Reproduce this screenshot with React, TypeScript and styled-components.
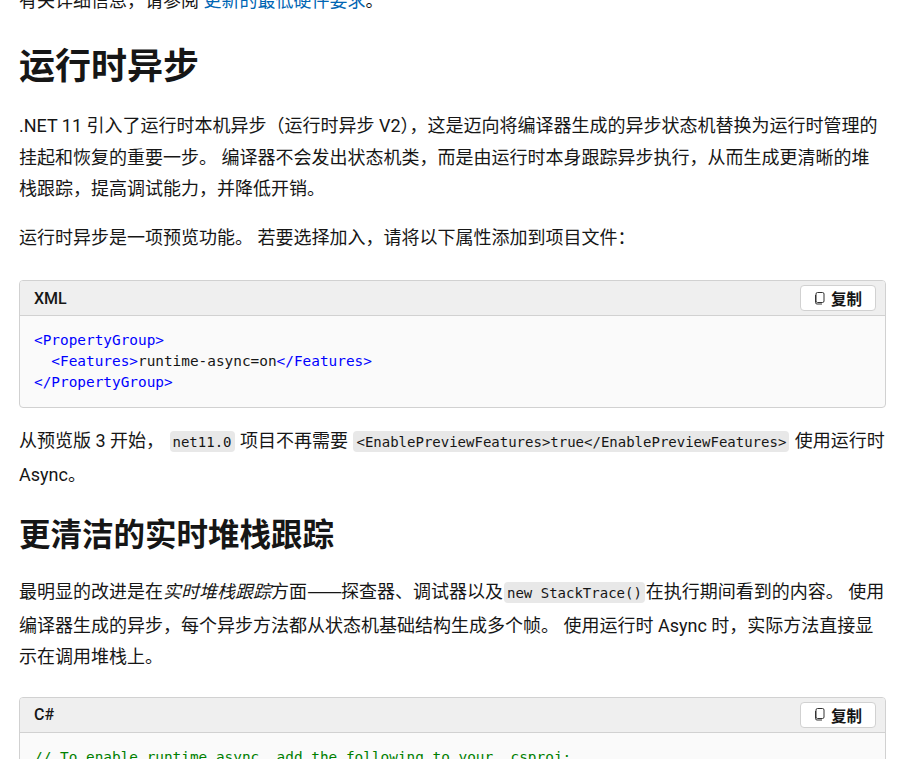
import React from "react";
import styled, { createGlobalStyle } from "styled-components";

const Global = createGlobalStyle`
  html, body { margin: 0; padding: 0; height: 759px; overflow: hidden; background: #fff; }
  body { font-family: Roboto, "Noto Sans CJK SC", sans-serif; color: #161616; }
`;

const Article = styled.main`
  width: 867px;
  margin: -15px 0 0 19px;
  font-size: 18px;
  line-height: 31.5px;
`;
const Para = styled.p<{ $mb?: number; $mt?: number }>`
  margin: ${(p) => p.$mt ?? 0}px 0 ${(p) => p.$mb ?? 17}px;
`;
const Link = styled.a`
  color: #0065b3;
`;
const Dash = styled.span`
  font-family: "Noto Sans CJK SC", sans-serif;
  display: inline-block;
  width: 34px;
  white-space: nowrap;
  transform: scaleX(1.17);
  transform-origin: left center;
`;
const H2 = styled.h2<{ $size: number; $top: number; $bottom: number }>`
  font-size: ${(p) => p.$size}px;
  line-height: 1.3;
  font-weight: 700;
  margin: ${(p) => p.$top}px 0 ${(p) => p.$bottom}px;
  color: #161616;
`;
const InlineCode = styled.code`
  font-family: "DejaVu Sans Mono", monospace;
  font-size: 14px;
  background: #e8e8e8;
  border-radius: 4px;
  padding: 3px 3px 2px;
  margin: 0 1px;
`;
const Block = styled.section`
  border: 1px solid #d1d1d1;
  border-radius: 4px;
  overflow: hidden;
  background: #fafafa;
`;
const BlockHead = styled.header`
  height: 34px;
  background: #efefef;
  border-bottom: 1px solid #d1d1d1;
  display: flex;
  align-items: center;
  justify-content: space-between;
  padding: 0 9px 0 14px;
  font-size: 16px;
  font-weight: 500;
`;
const CopyBtn = styled.button`
  width: 76px;
  height: 26px;
  display: flex;
  align-items: center;
  justify-content: center;
  gap: 6px;
  background: #fff;
  border: 1px solid #d1d1d1;
  border-radius: 4px;
  padding: 0;
  font: 700 15.5px Roboto, "Noto Sans CJK SC", sans-serif;
  color: #161616;
`;
const Pre = styled.pre`
  margin: 0;
  padding: 14px;
  font-family: "DejaVu Sans Mono", monospace;
  font-size: 14.4px;
  line-height: 21px;
  color: #161616;
`;
const Tag = styled.span`
  color: #0000ff;
`;
const Comment = styled.span`
  color: #008000;
`;

const CopyIcon = () => (
  <svg width="11" height="13" viewBox="0 0 11 13" fill="none" stroke="#333" strokeWidth="1">
    <path d="M3.5 .5h5a1.5 1.5 0 0 1 1.5 1.5v7a1.5 1.5 0 0 1-1.5 1.5h-5A1.5 1.5 0 0 1 2 9V2A1.5 1.5 0 0 1 3.5 .5z" />
    <path d="M1.5 3v7.5a1.5 1.5 0 0 0 1.5 1.5h5" />
  </svg>
);

const Head = ({ label }: { label: string }) => (
  <BlockHead>
    <span>{label}</span>
    <CopyBtn>
      <CopyIcon />
      复制
    </CopyBtn>
  </BlockHead>
);

export default function App() {
  return (
    <>
      <Global />
      <Article>
        <Para>
          有关详细信息，请参阅 <Link>更新的最低硬件要求</Link>。
        </Para>
        <H2 $size={36} $top={27} $bottom={20}>运行时异步</H2>
        <Para>
          .NET 11 引入了运行时本机异步（运行时异步 V2），这是迈向将编译器生成的异步状态机替换为运行时管理的挂起和恢复的重要一步。 编译器不会发出状态机类，而是由运行时本身跟踪异步执行，从而生成更清晰的堆栈跟踪，提高调试能力，并降低开销。
        </Para>
        <Para $mb={27}>运行时异步是一项预览功能。 若要选择加入，请将以下属性添加到项目文件：</Para>
        <Block>
          <Head label="XML" />
          <Pre>
            <Tag>&lt;PropertyGroup&gt;</Tag>
            {"\n  "}
            <Tag>&lt;Features&gt;</Tag>runtime-async=on<Tag>&lt;/Features&gt;</Tag>
            {"\n"}
            <Tag>&lt;/PropertyGroup&gt;</Tag>
          </Pre>
        </Block>
        <Para $mt={17}>
          从预览版 3 开始， <InlineCode>net11.0</InlineCode> 项目不再需要 <InlineCode>&lt;EnablePreviewFeatures&gt;true&lt;/EnablePreviewFeatures&gt;</InlineCode> 使用运行时 Async。
        </Para>
        <H2 $size={31.5} $top={26} $bottom={18}>更清洁的实时堆栈跟踪</H2>
        <Para $mb={24}>
          最明显的改进是在<em>实时堆栈跟踪</em>方面<Dash>——</Dash>探查器、调试器以及<InlineCode>new StackTrace()</InlineCode>在执行期间看到的内容。 使用编译器生成的异步，每个异步方法都从状态机基础结构生成多个帧。 使用运行时 Async 时，实际方法直接显示在调用堆栈上。
        </Para>
        <Block>
          <Head label="C#" />
          <Pre>
            <Comment>// To enable runtime async, add the following to your .csproj:</Comment>
          </Pre>
        </Block>
      </Article>
    </>
  );
}
